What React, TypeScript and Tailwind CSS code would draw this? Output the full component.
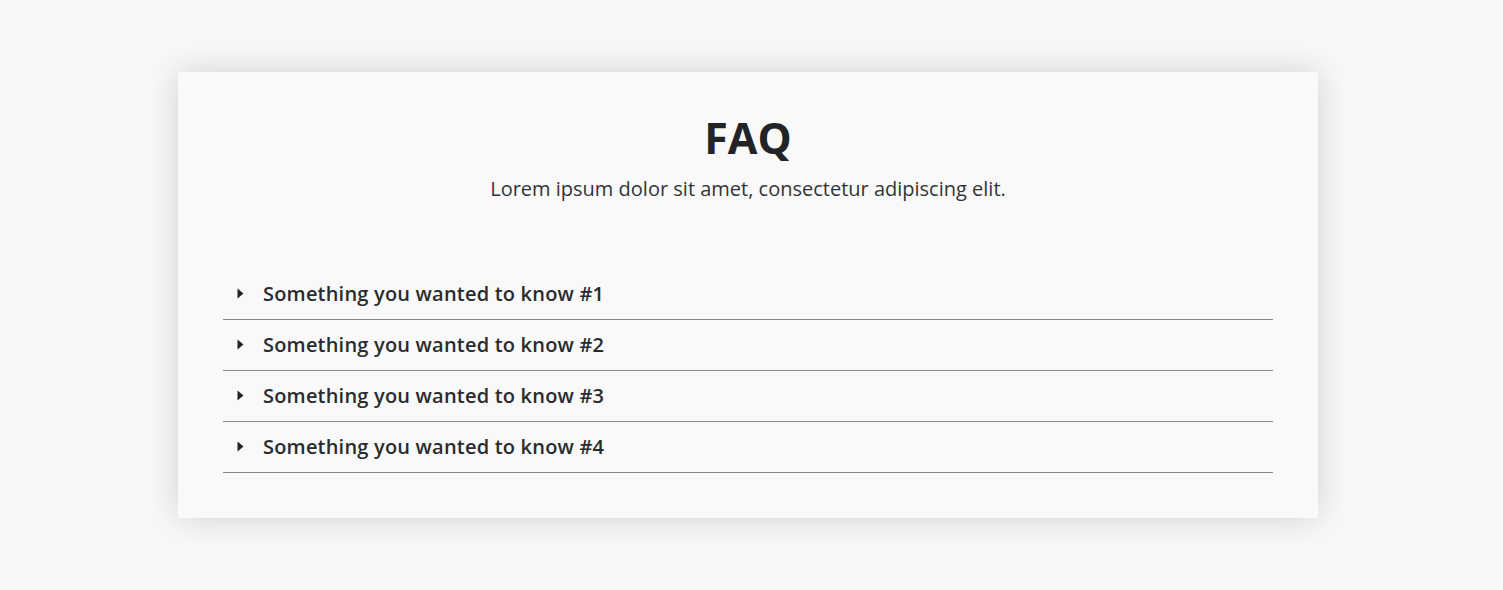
import React from "react";

const items = [
  "Something you wanted to know #1",
  "Something you wanted to know #2",
  "Something you wanted to know #3",
  "Something you wanted to know #4",
];

export default function App() {
  return (
    <div
      className="min-h-[590px] w-full bg-[#f8f8f8] pt-[72px] pl-[178px] pb-[72px]"
      style={{ fontFamily: '"Open Sans", "Noto Sans", sans-serif' }}
    >
      <div className="w-[1140px] bg-[#f9f9f9] px-[45px] pt-[39px] pb-[45px] shadow-[0_0_32px_rgba(0,0,0,0.16)]">
        <h1 className="text-center text-[43px] leading-[54px] font-bold text-[#222326]">FAQ</h1>
        <p className="mt-[9px] text-center text-[20px] leading-[30px] text-[#333438]">
          Lorem ipsum dolor sit amet, consectetur adipiscing elit.
        </p>
        <div className="mt-[65px] flex flex-col">
          {items.map((t) => (
            <div key={t} className="flex h-[51px] items-start border-b border-[#888]">
              <svg width="7" height="11" viewBox="0 0 7 11" className="ml-[14px] mr-[19px] mt-[19px] shrink-0">
                <path d="M0.5 0.5 L6.5 5.5 L0.5 10.5 Z" fill="#222326" />
              </svg>
              <span className="text-[20px] leading-[50px] tracking-[0.2px] font-semibold text-[#2a2b2e]">{t}</span>
            </div>
          ))}
        </div>
      </div>
    </div>
  );
}
